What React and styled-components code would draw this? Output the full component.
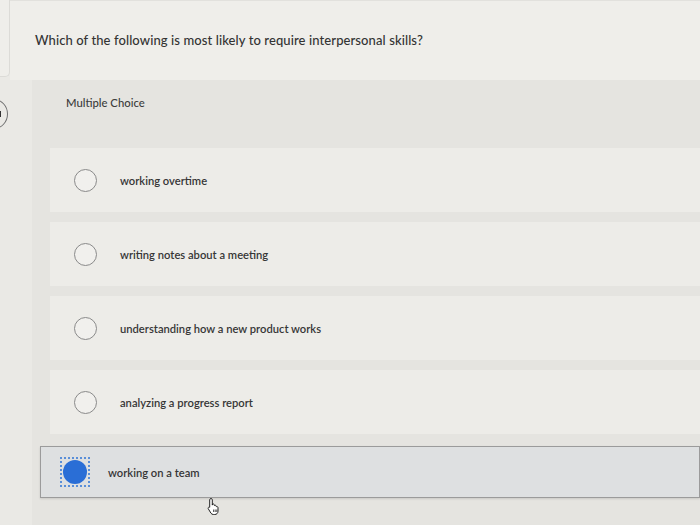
import React from "react";
import styled, { createGlobalStyle } from "styled-components";

const Global = createGlobalStyle`
  html, body { margin: 0; padding: 0; }
  body {
    background: #e9e8e4;
    font-family: "Lato", "Open Sans", "Liberation Sans", sans-serif;
    color: #3a3a3a;
  }
`;

const Screen = styled.div`
  display: flex;
  width: 700px;
  height: 525px;
  overflow: hidden;
  background: #eae9e5;
`;

const Rail = styled.div`
  width: 10px;
  flex: none;
  display: flex;
  flex-direction: column;
  gap: 22px;
`;

const RailCard = styled.div`
  height: 76px;
  background: #efeeea;
  border: 1px solid #dcdbd7;
  border-left: none;
  border-top: none;
  border-bottom-right-radius: 5px;
`;

const RailButton = styled.div`
  width: 28px;
  height: 30px;
  margin-left: -20px;
  border: 1.5px solid #707070;
  border-radius: 50%;
  display: flex;
  align-items: center;
  justify-content: flex-end;
  padding-right: 6px;
  box-sizing: border-box;
  &::after {
    content: "";
    width: 2px;
    height: 6px;
    background: #333;
  }
`;

const Main = styled.div`
  flex: 1;
  display: flex;
  flex-direction: column;
  min-width: 0;
`;

const Header = styled.div`
  height: 80px;
  box-sizing: border-box;
  padding: 30px 0 0 25px;
  background: #efeeea;
  border-top: 1px solid #e2e1dd;
`;

const Question = styled.h1`
  margin: 0;
  font-size: 13px;
  font-weight: 500;
  line-height: 18px;
  color: #333;
  letter-spacing: 0.1px;
`;

const Panel = styled.section`
  flex: 1;
  margin-left: 22px;
  padding-top: 15px;
  background: #e5e4e0;
  display: flex;
  flex-direction: column;
`;

const Label = styled.div`
  padding-left: 34px;
  font-size: 11.3px;
  line-height: 16px;
  font-weight: 500;
  color: #3c3c3c;
`;

const Options = styled.div`
  margin-top: 37px;
  display: flex;
  flex-direction: column;
  gap: 10px;
`;

const Option = styled.label`
  position: relative;
  display: flex;
  align-items: center;
  gap: ${(p) => (p.$selected ? "20px" : "23px")};
  height: ${(p) => (p.$selected ? "52px" : "64px")};
  margin-left: ${(p) => (p.$selected ? "8px" : "18px")};
  margin-top: ${(p) => (p.$selected ? "2px" : "0")};
  padding-left: ${(p) => (p.$selected ? "21px" : "24px")};
  box-sizing: border-box;
  background: ${(p) => (p.$selected ? "#dee0e1" : "#edece8")};
  border: ${(p) => (p.$selected ? "1px solid #9b9b9b" : "none")};
  box-shadow: ${(p) => (p.$selected ? "0 1px 2px rgba(0,0,0,0.12)" : "none")};
  font-size: 11.2px;
  font-weight: 600;
  color: #363636;
  cursor: pointer;
`;

const Radio = styled.span`
  flex: none;
  width: 23px;
  height: 23px;
  box-sizing: border-box;
  border-radius: 50%;
  border: 1.3px solid #8a8a8a;
  background: #f1f0ed;
`;

const FocusRing = styled.span`
  flex: none;
  width: 26px;
  height: 26px;
  padding: 1px;
  box-sizing: border-box;
  outline: 2px dotted #5a8fd8;
  outline-offset: 0;
  display: flex;
  align-items: center;
  justify-content: center;
  &::before {
    content: "";
    width: 24px;
    height: 24px;
    border-radius: 50%;
    background: #2a6ed6;
  }
`;

const Cursor = styled.svg`
  position: absolute;
  left: 165px;
  top: 50px;
`;

const answers = [
  "working overtime",
  "writing notes about a meeting",
  "understanding how a new product works",
  "analyzing a progress report",
  "working on a team",
];

export default function App() {
  const chosen = 4;
  return (
    <>
      <Global />
      <Screen>
        <Rail>
          <RailCard />
          <RailButton />
        </Rail>
        <Main>
          <Header>
            <Question>Which of the following is most likely to require interpersonal skills?</Question>
          </Header>
          <Panel>
            <Label>Multiple Choice</Label>
            <Options>
              {answers.map((text, i) => (
                <Option key={text} $selected={i === chosen}>
                  {i === chosen ? <FocusRing /> : <Radio />}
                  <span>{text}</span>
                  {i === chosen && (
                    <Cursor width="16" height="18" viewBox="0 0 16 18">
                      <path
                        d="M5 1.5c.8 0 1.3.6 1.3 1.3v5.3l.2-1c.8-.4 1.7 0 1.8.8l.1.6c.7-.5 1.7-.2 1.8.7l.1.5c.7-.4 1.7 0 1.7.9v3.6c0 2-1.4 3.3-3.3 3.3H7.4c-1.1 0-1.9-.5-2.5-1.4L2.3 11.8c-.5-.7 0-1.8 1-1.6l.4.1V2.8c0-.7.5-1.3 1.300-1.3z"
                        fill="#fff"
                        stroke="#222"
                        strokeWidth="1"
                        strokeLinejoin="round"
                      />
                      <path d="M7.6 12.5v2.5M9.2 12.5v2.5M10.8 12.5v2.5" stroke="#222" strokeWidth="0.8" />
                    </Cursor>
                  )}
                </Option>
              ))}
            </Options>
          </Panel>
        </Main>
      </Screen>
    </>
  );
}
